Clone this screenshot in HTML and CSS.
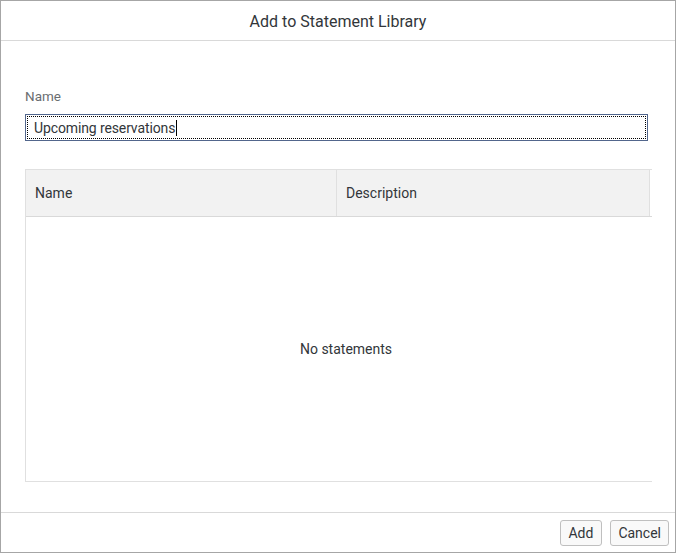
FILE: index.html
```
<!DOCTYPE html>
<html>
<head>
<meta charset="utf-8">
<link rel="stylesheet" href="styles.css">
</head>
<body>
<div class="dialog">
  <header class="dlg-header">Add to Statement Library</header>
  <main class="dlg-content">
    <label class="field-label">Name</label>
    <div class="input"><span class="input-text">Upcoming reservations</span><span class="caret"></span></div>
    <div class="table">
      <div class="thead">
        <div class="th th-name">Name</div>
        <div class="th th-desc">Description</div>
        <div class="th-spacer"></div>
      </div>
      <div class="tbody">No statements</div>
    </div>
  </main>
  <footer class="dlg-footer">
    <button class="btn">Add</button>
    <button class="btn">Cancel</button>
  </footer>
</div>
</body>
</html>
```
FILE: styles.css
```
* { box-sizing: border-box; }
html, body { margin: 0; padding: 0; background: #fff; }
body { font-family: Roboto, "Liberation Sans", sans-serif; color: #32363a; }

.dialog {
  width: 676px;
  height: 553px;
  border: 1px solid #a6a6a6;
  display: flex;
  flex-direction: column;
  background: #fff;
}

.dlg-header {
  height: 40px;
  border-bottom: 1px solid #d9d9d9;
  display: flex;
  align-items: center;
  justify-content: center;
  font-size: 16px;
  color: #32363a;
  padding-top: 1px;
}

.dlg-content {
  flex: 1;
  padding: 47px 0 0 24px;
  display: flex;
  flex-direction: column;
}

.field-label {
  font-size: 13.5px;
  color: #6a6d70;
  line-height: 16px;
  height: 16px;
}

.input {
  margin-top: 10px;
  width: 623px;
  height: 27px;
  border: 1px solid #52668c;
  outline: 1px dotted #000;
  outline-offset: -3px;
  display: flex;
  align-items: center;
  padding-left: 8px;
  font-size: 14px;
  letter-spacing: -0.12px;
  color: #32363a;
}
.caret {
  display: inline-block;
  width: 1px;
  height: 16px;
  background: #000;
  margin-left: 1px;
}

.table {
  margin-top: 28px;
  width: 627px;
  height: 313px;
  display: flex;
  flex-direction: column;
  border-left: 1px solid #e0e0e0;
  border-bottom: 1px solid #e0e0e0;
}

.thead {
  height: 48px;
  display: flex;
  background: #f2f2f2;
  border-top: 1px solid #e0e0e0;
  border-bottom: 1px solid #d9d9d9;
}
.th {
  display: flex;
  align-items: center;
  font-size: 14px;
  color: #32363a;
  padding-left: 9px;
  padding-bottom: 1px;
}
.th-name { width: 311px; border-right: 1px solid #e0e0e0; }
.th-desc { width: 313px; border-right: 1px solid #e0e0e0; }
.th-spacer { flex: 1; background: #fff; }

.tbody {
  flex: 1;
  display: flex;
  align-items: center;
  justify-content: center;
  font-size: 14px;
  color: #32363a;
  padding-left: 14px;
}

.dlg-footer {
  height: 40px;
  border-top: 1px solid #d9d9d9;
  display: flex;
  justify-content: flex-end;
  align-items: center;
  gap: 8px;
  padding-right: 6px;
  padding-top: 1px;
}

.btn {
  height: 26px;
  padding: 0 7px;
  border: 1px solid #bfbfbf;
  border-radius: 3px;
  background: #f9f9f9;
  font-family: Roboto, "Liberation Sans", sans-serif;
  font-size: 14px;
  color: #32363a;
}
.btn:first-child { padding-right: 8px; }
```
